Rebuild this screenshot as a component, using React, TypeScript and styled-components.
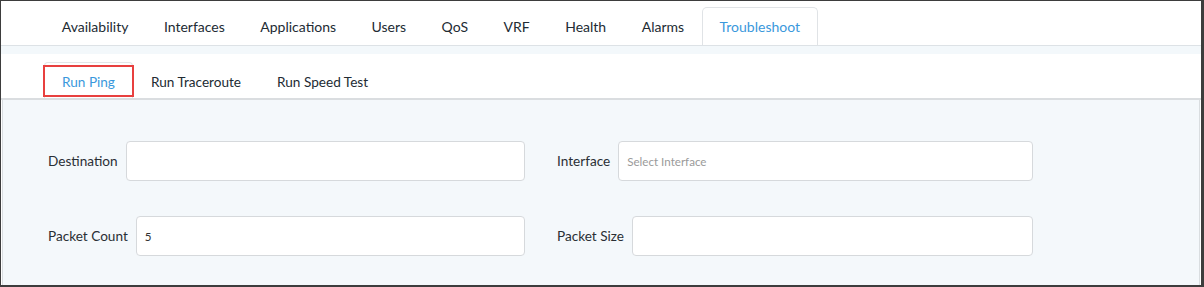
import React from 'react'
import styled, { createGlobalStyle } from 'styled-components'

const GlobalStyle = createGlobalStyle`
    * { box-sizing: border-box; }
    body {
        margin: 0;
        font-family: Lato, "Open Sans", sans-serif;
        background: #ffffff;
    }
`

const mainTabs = ['Availability', 'Interfaces', 'Applications', 'Users', 'QoS', 'VRF', 'Health', 'Alarms', 'Troubleshoot']
const subTabs = ['Run Ping', 'Run Traceroute', 'Run Speed Test']

type TabProps = { $active?: boolean }

const App = () => {
  return (
    <>
        <GlobalStyle />
        <Frame>
            <TabBar>
                {mainTabs.map((t) => (
                    <Tab key={t} $active={t === 'Troubleshoot'}>{t}</Tab>
                ))}
            </TabBar>

            <Band />

            <SubTabBar>
                {subTabs.map((t) => (
                    <SubTab key={t} $active={t === 'Run Ping'}>
                        {t}
                        {t === 'Run Ping' && <Highlight />}
                    </SubTab>
                ))}
            </SubTabBar>

            <Panel>
                <FormGrid>
                    <Field>
                        <Label>Destination</Label>
                        <Input />
                    </Field>
                    <Field>
                        <Label>Interface</Label>
                        <Input placeholder='Select Interface' />
                    </Field>
                    <Field>
                        <Label>Packet Count</Label>
                        <Input defaultValue='5' />
                    </Field>
                    <Field>
                        <Label>Packet Size</Label>
                        <Input />
                    </Field>
                </FormGrid>
            </Panel>
        </Frame>
    </>
  )
}

export default App

const Frame = styled.div`
    width: 1204px;
    height: 287px;
    border-style: solid;
    border-color: #3d3d3d;
    border-width: 1px 3px 2px 1px;
    display: flex;
    flex-direction: column;
    background: #ffffff;
    overflow: hidden;
`

const TabBar = styled.div`
    height: 45px;
    flex-shrink: 0;
    display: flex;
    align-items: flex-end;
    padding-left: 43px;
    border-bottom: 1px solid #dde2e6;
`

const Tab = styled.div<TabProps>`
    height: 38px;
    padding: 0 16.75px;
    display: flex;
    align-items: center;
    font-size: 14px;
    color: ${(p) => (p.$active ? '#3a98dc' : '#222b33')};
    border: 1px solid ${(p) => (p.$active ? '#e0e3e6' : 'transparent')};
    border-bottom: none;
    border-radius: 5px 5px 0 0;
`

const Band = styled.div`
    height: 8px;
    flex-shrink: 0;
    background: #f3f8fb;
`

const SubTabBar = styled.div`
    height: 46px;
    flex-shrink: 0;
    display: flex;
    align-items: flex-end;
    padding-left: 43px;
    border-bottom: 2px solid #dadde0;
`

const SubTab = styled.div<TabProps>`
    position: relative;
    height: 36px;
    padding: 2px 17px 0;
    display: flex;
    align-items: center;
    font-size: 13.6px;
    color: ${(p) => (p.$active ? '#3a98dc' : '#222b33')};
    border: 1px solid ${(p) => (p.$active ? '#e3e6e8' : 'transparent')};
    border-bottom: none;
    border-radius: 4px 4px 0 0;
`

const Highlight = styled.span`
    position: absolute;
    left: -2px;
    right: -2px;
    top: 2px;
    bottom: 1px;
    border: 2px solid #e8403f;
    pointer-events: none;
`

const Panel = styled.div`
    flex: 1;
    background: #f4f8fb;
    border-left: 1px solid #d9dde0;
    border-right: 1px solid #d9dde0;
    margin: 0 1px 0 1px;
    padding: 41px 0 0 45px;
`

const FormGrid = styled.div`
    display: grid;
    grid-template-columns: 477px 476px;
    column-gap: 32px;
    row-gap: 35px;
`

const Field = styled.label`
    display: flex;
    align-items: center;
    gap: 8px;
    height: 40px;
`

const Label = styled.span`
    font-size: 13.6px;
    color: #2a2f35;
    white-space: nowrap;
`

const Input = styled.input`
    flex: 1;
    min-width: 0;
    height: 40px;
    border: 1px solid #d6d9dc;
    border-radius: 4px;
    background: #ffffff;
    padding: 0 8px;
    font-family: Lato, "Open Sans", sans-serif;
    font-size: 11.6px;
    color: #333;
    outline: none;

    &::placeholder {
        color: #9a9a9a;
    }
`
